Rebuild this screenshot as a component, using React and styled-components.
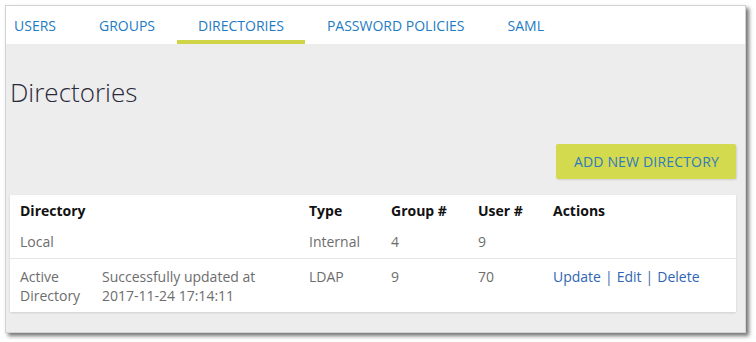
import React from "react";
import styled, { createGlobalStyle } from "styled-components";

const Global = createGlobalStyle`
  html, body { margin: 0; padding: 0; background: #ffffff; }
  body { font-family: "Open Sans", "Liberation Sans", sans-serif; }
  * { box-sizing: border-box; }
`;

const Page = styled.div`
  padding: 5px 0 0 5px;
  width: 756px;
  height: 342px;
`;

const Frame = styled.div`
  width: 741px;
  height: 328px;
  border: 1px solid #d2d2d2;
  background: #ededed;
  box-shadow: 3px 3px 4px rgba(0, 0, 0, 0.55);
  display: flex;
  flex-direction: column;
`;

const TabBar = styled.nav`
  height: 38px;
  background: #ffffff;
  display: flex;
  align-items: stretch;
`;

const Tab = styled.a`
  display: flex;
  align-items: center;
  padding: 4px 21.5px 0;
  font-size: 14px;
  color: #1e7bc4;
  text-decoration: none;
  border-bottom: 4px solid ${(p) => (p.$active ? "#cfd546" : "transparent")};
  &:first-child { padding-left: 8px; }
`;

const Content = styled.main`
  flex: 1;
  padding: 0 9px 0 4px;
  display: flex;
  flex-direction: column;
`;

const Heading = styled.h1`
  margin: 33px 0 0 0;
  font-size: 26px;
  line-height: 31px;
  font-weight: 300;
  color: #2a2a3a;
`;

const Toolbar = styled.div`
  display: flex;
  justify-content: flex-end;
  margin-top: 36px;
`;

const Button = styled.button`
  height: 35px;
  padding: 0 17px 0 18px;
  border: none;
  border-radius: 2px;
  background: #d4da4e;
  color: #2e7bbd;
  font-family: "Open Sans", "Liberation Sans", sans-serif;
  font-size: 14px;
  font-weight: 500;
  letter-spacing: 0.18px;
  box-shadow: 1px 1px 2px rgba(0, 0, 0, 0.12);
  cursor: pointer;
`;

const Card = styled.div`
  margin-top: 16px;
  background: #ffffff;
  box-shadow: 0 1px 2px rgba(0, 0, 0, 0.12);
`;

const Row = styled.div`
  display: grid;
  grid-template-columns: 82px 207px 82px 87px 75px 1fr;
  padding: ${(p) => p.$pad || "6px 10px"};
  border-bottom: ${(p) => (p.$divider ? "1px solid #e6e6e6" : "none")};
  font-size: 14px;
  line-height: 19px;
`;

const HeadCell = styled.div`
  font-weight: 700;
  color: #111111;
  grid-column: ${(p) => p.$span || "auto"};
`;

const Cell = styled.div`
  color: #6d6d6d;
`;

const NoWrap = styled.span`
  white-space: nowrap;
`;

const Actions = styled.div`
  color: #3a68b0;
`;

const Link = styled.a`
  color: #2f64b4;
  text-decoration: none;
`;

const Sep = styled.span`
  color: #3a68b0;
  margin: 0 4px;
`;

export default function App() {
  return (
    <>
      <Global />
      <Page>
        <Frame>
          <TabBar>
            <Tab>USERS</Tab>
            <Tab>GROUPS</Tab>
            <Tab $active>DIRECTORIES</Tab>
            <Tab>PASSWORD POLICIES</Tab>
            <Tab>SAML</Tab>
          </TabBar>
          <Content>
            <Heading>Directories</Heading>
            <Toolbar>
              <Button>ADD NEW DIRECTORY</Button>
            </Toolbar>
            <Card>
              <Row $pad="6px 10px 6px">
                <HeadCell $span="span 2">Directory</HeadCell>
                <HeadCell>Type</HeadCell>
                <HeadCell>Group #</HeadCell>
                <HeadCell>User #</HeadCell>
                <HeadCell>Actions</HeadCell>
              </Row>
              <Row $pad="6px 10px 7px" $divider>
                <Cell>Local</Cell>
                <Cell></Cell>
                <Cell>Internal</Cell>
                <Cell>4</Cell>
                <Cell>9</Cell>
                <Cell></Cell>
              </Row>
              <Row $pad="8px 10px 7px">
                <Cell>Active Directory</Cell>
                <Cell>
                  Successfully updated at <NoWrap>2017-11-24 17:14:11</NoWrap>
                </Cell>
                <Cell>LDAP</Cell>
                <Cell>9</Cell>
                <Cell>70</Cell>
                <Actions>
                  <Link>Update</Link>
                  <Sep>|</Sep>
                  <Link>Edit</Link>
                  <Sep>|</Sep>
                  <Link>Delete</Link>
                </Actions>
              </Row>
            </Card>
          </Content>
        </Frame>
      </Page>
    </>
  );
}
